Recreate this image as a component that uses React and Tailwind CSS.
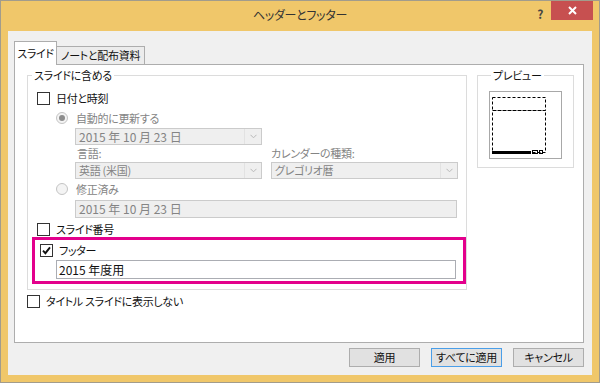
import React from 'react'

function Check({ checked }) {
  return (
    <span className="flex h-[13px] w-[13px] shrink-0 items-center justify-center border border-[#333333] bg-white">
      {checked && (
        <svg width="9" height="9" viewBox="0 0 9 9">
          <path d="M1 4.6 L3.4 7.2 L8 1.4" stroke="#111" strokeWidth="1.9" fill="none" />
        </svg>
      )}
    </span>
  )
}

function Radio({ on }) {
  return (
    <span className="flex h-[12px] w-[12px] shrink-0 items-center justify-center rounded-full border border-[#c4c4c4] bg-[#f4f4f4]">
      {on && <span className="h-[6px] w-[6px] rounded-full bg-[#8d8d8d]" />}
    </span>
  )
}

function Combo({ value, width, big }) {
  return (
    <div className={`flex h-[17px] items-stretch border border-[#cbcbcb] bg-[#efefef] ${width}`}>
      <span
        className={`flex-1 whitespace-nowrap pl-[3px] leading-[15px] text-[#848484] ${
          big ? 'text-[12px] tracking-normal' : ''
        }`}
      >
        {value}
      </span>
      <span className="flex w-[17px] items-center justify-center border-l border-[#e2e2e2]">
        <svg width="7" height="5" viewBox="0 0 7 5">
          <path d="M0.5 0.8 L3.5 3.8 L6.5 0.8" stroke="#b9b9b9" fill="none" />
        </svg>
      </span>
    </div>
  )
}

function Button({ children, primary }) {
  return (
    <button
      className={`flex h-[19px] w-[71px] items-center justify-center whitespace-nowrap border bg-[#e1e1e1] leading-none text-[#111] ${
        primary ? 'border-[#4a9ee8]' : 'border-[#adadad]'
      }`}
    >
      {children}
    </button>
  )
}

export default function App() {
  return (
    <div className="h-[383px] w-[600px] overflow-hidden bg-white font-['Noto_Sans_CJK_JP',sans-serif] text-[11px] tracking-[-0.3px] [font-feature-settings:'palt']">
      <div className="flex h-full w-full flex-col border border-[#a29c8c] bg-[#f0c76a]">
        {/* Title bar */}
        <div className="grid h-[30px] grid-cols-[1fr_auto_1fr]">
          <div />
          <div className="pt-[4px] text-[12px] leading-[20px] text-[#333]">ヘッダーとフッター</div>
          <div className="flex items-start justify-end pr-[6px]">
            <span className="mr-[8px] mt-[4px] text-[12px] font-bold leading-[18px] text-[#444]">?</span>
            <span className="flex h-[19px] w-[42px] items-center justify-center bg-[#c75050]">
              <svg width="9" height="9" viewBox="0 0 9 9">
                <path d="M1 1 L8 8 M8 1 L1 8" stroke="#fff" strokeWidth="2" />
              </svg>
            </span>
          </div>
        </div>

        {/* Client area */}
        <div className="mx-[7px] flex h-[344px] flex-col bg-[#f0f0f0] pl-[6px] pr-[8px] pt-[10px]">
          {/* Tabs */}
          <div className="flex h-[23px] items-end">
            <div className="relative z-10 -mb-px flex h-[24px] w-[43px] items-center justify-center whitespace-nowrap border-x border-t border-[#adadad] bg-white pb-[1px] text-[#111]">
              スライド
            </div>
            <div className="flex h-[18px] w-[88px] items-center justify-center whitespace-nowrap border-r border-t border-[#adadad] bg-[#ececec] text-[#111]">
              ノートと配布資料
            </div>
          </div>

          {/* Panel */}
          <div className="flex h-[279px] flex-col border border-[#adadad] bg-white pl-[12px] pt-[2px]">
            <div className="flex">
              <fieldset className="w-[440px] min-w-0 shrink-0 border border-[#dcdcdc] pb-[5px] pt-[5px]">
                <legend className="ml-[4px] px-[2px] leading-[16px] text-[#111]">スライドに含める</legend>

                <div className="flex h-[20px] items-center gap-[6px] pl-[9px] text-[#111]">
                  <Check />
                  <span>日付と時刻</span>
                </div>
                <div className="flex h-[20px] items-center gap-[8px] pl-[28px] text-[#848484]">
                  <Radio on />
                  <span>自動的に更新する</span>
                </div>
                <div className="pl-[47px]">
                  <Combo value="2015 年 10 月 23 日" width="w-[187px]" big />
                </div>
                <div className="flex h-[17px] items-center pl-[49px] text-[#848484]">
                  <span className="w-[194px]">言語:</span>
                  <span>カレンダーの種類:</span>
                </div>
                <div className="flex gap-[9px] pl-[47px]">
                  <Combo value="英語 (米国)" width="w-[187px]" />
                  <Combo value="グレゴリオ暦" width="w-[187px]" />
                </div>
                <div className="flex h-[20px] items-center gap-[8px] pl-[28px] text-[#848484]">
                  <Radio />
                  <span>修正済み</span>
                </div>
                <div className="ml-[47px] mt-[1px] flex h-[18px] w-[382px] items-center border border-[#cbcbcb] bg-[#efefef] pl-[3px] text-[12px] tracking-normal text-[#848484]">
                  2015 年 10 月 23 日
                </div>
                <div className="mt-[3px] flex h-[17px] items-center gap-[6px] pl-[9px] text-[#111]">
                  <Check />
                  <span>スライド番号</span>
                </div>
                <div className="-mt-px ml-[4px] border-[3px] border-[#e3008c] pb-[2px] pl-[2px] pr-[7px]">
                  <div className="flex h-[19px] items-center gap-[6px] pl-[3px] pt-[1px] text-[#111]">
                    <Check checked />
                    <span>フッター</span>
                  </div>
                  <div className="ml-[19px] mt-[1px] flex h-[19px] items-center border border-[#abadb3] bg-white pl-[2px] text-[12px] tracking-normal text-[#111]">
                    2015 年度用
                  </div>
                </div>
              </fieldset>

              <fieldset className="ml-[10px] h-[101px] w-[97px] min-w-0 shrink-0 border border-[#dcdcdc] pl-[11px] pt-[8px]">
                <legend className="ml-[2px] px-[2px] leading-[16px] text-[#111]">プレビュー</legend>
                <div className="h-[68px] w-[73px] border border-[#a8a8a8] bg-white">
                  <svg width="71" height="66" viewBox="0 0 71 66">
                    <rect x="2.5" y="5.5" width="53" height="13" fill="none" stroke="#000" strokeDasharray="3 2" />
                    <rect x="2.5" y="18.5" width="53" height="42" fill="none" stroke="#000" strokeDasharray="3 2" />
                    <rect x="2" y="59" width="39" height="3" fill="#000" />
                    <rect x="42.5" y="58.5" width="5" height="3" fill="none" stroke="#000" />
                    <rect x="49.5" y="58.5" width="3" height="3" fill="none" stroke="#000" />
                  </svg>
                </div>
              </fieldset>
            </div>

            <div className="mt-[3px] flex h-[16px] items-center gap-[6px] text-[#111]">
              <Check />
              <span>タイトル スライドに表示しない</span>
            </div>
          </div>

          {/* Buttons */}
          <div className="mt-[5px] flex justify-end gap-[11px]">
            <Button>適用</Button>
            <Button primary>すべてに適用</Button>
            <Button>キャンセル</Button>
          </div>
        </div>
      </div>
    </div>
  )
}
